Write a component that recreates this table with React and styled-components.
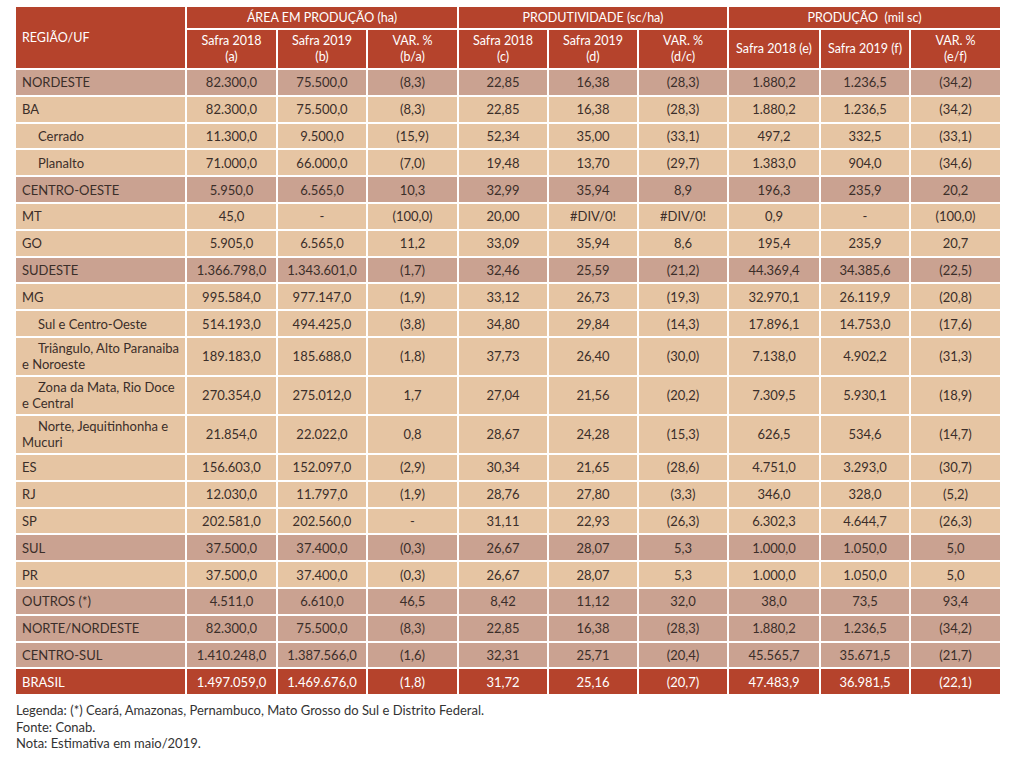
import React from 'react';
import styled, { createGlobalStyle } from 'styled-components';

const GlobalStyle = createGlobalStyle`
  html, body {
    margin: 0;
    padding: 0;
    background: #ffffff;
  }
  body {
    font-family: Lato, 'Noto Sans', sans-serif;
  }
`;

const RED = '#b5432c';
const DARK = '#caa291';
const LIGHT = '#e6c5a3';

const rows = [
  { label: 'NORDESTE', kind: 'region', v: ['82.300,0', '75.500,0', '(8,3)', '22,85', '16,38', '(28,3)', '1.880,2', '1.236,5', '(34,2)'] },
  { label: 'BA', kind: 'state', v: ['82.300,0', '75.500,0', '(8,3)', '22,85', '16,38', '(28,3)', '1.880,2', '1.236,5', '(34,2)'] },
  { label: 'Cerrado', kind: 'state', sub: true, v: ['11.300,0', '9.500,0', '(15,9)', '52,34', '35,00', '(33,1)', '497,2', '332,5', '(33,1)'] },
  { label: 'Planalto', kind: 'state', sub: true, v: ['71.000,0', '66.000,0', '(7,0)', '19,48', '13,70', '(29,7)', '1.383,0', '904,0', '(34,6)'] },
  { label: 'CENTRO-OESTE', kind: 'region', v: ['5.950,0', '6.565,0', '10,3', '32,99', '35,94', '8,9', '196,3', '235,9', '20,2'] },
  { label: 'MT', kind: 'state', v: ['45,0', '-', '(100,0)', '20,00', '#DIV/0!', '#DIV/0!', '0,9', '-', '(100,0)'] },
  { label: 'GO', kind: 'state', v: ['5.905,0', '6.565,0', '11,2', '33,09', '35,94', '8,6', '195,4', '235,9', '20,7'] },
  { label: 'SUDESTE', kind: 'region', v: ['1.366.798,0', '1.343.601,0', '(1,7)', '32,46', '25,59', '(21,2)', '44.369,4', '34.385,6', '(22,5)'] },
  { label: 'MG', kind: 'state', v: ['995.584,0', '977.147,0', '(1,9)', '33,12', '26,73', '(19,3)', '32.970,1', '26.119,9', '(20,8)'] },
  { label: 'Sul e Centro-Oeste', kind: 'state', sub: true, v: ['514.193,0', '494.425,0', '(3,8)', '34,80', '29,84', '(14,3)', '17.896,1', '14.753,0', '(17,6)'] },
  { label: ['Triângulo, Alto Paranaiba', 'e Noroeste'], kind: 'state', sub: true, v: ['189.183,0', '185.688,0', '(1,8)', '37,73', '26,40', '(30,0)', '7.138,0', '4.902,2', '(31,3)'] },
  { label: ['Zona da Mata, Rio Doce', 'e Central'], kind: 'state', sub: true, v: ['270.354,0', '275.012,0', '1,7', '27,04', '21,56', '(20,2)', '7.309,5', '5.930,1', '(18,9)'] },
  { label: ['Norte, Jequitinhonha e', 'Mucuri'], kind: 'state', sub: true, v: ['21.854,0', '22.022,0', '0,8', '28,67', '24,28', '(15,3)', '626,5', '534,6', '(14,7)'] },
  { label: 'ES', kind: 'state', v: ['156.603,0', '152.097,0', '(2,9)', '30,34', '21,65', '(28,6)', '4.751,0', '3.293,0', '(30,7)'] },
  { label: 'RJ', kind: 'state', v: ['12.030,0', '11.797,0', '(1,9)', '28,76', '27,80', '(3,3)', '346,0', '328,0', '(5,2)'] },
  { label: 'SP', kind: 'state', v: ['202.581,0', '202.560,0', '-', '31,11', '22,93', '(26,3)', '6.302,3', '4.644,7', '(26,3)'] },
  { label: 'SUL', kind: 'region', v: ['37.500,0', '37.400,0', '(0,3)', '26,67', '28,07', '5,3', '1.000,0', '1.050,0', '5,0'] },
  { label: 'PR', kind: 'state', v: ['37.500,0', '37.400,0', '(0,3)', '26,67', '28,07', '5,3', '1.000,0', '1.050,0', '5,0'] },
  { label: 'OUTROS (*)', kind: 'region', v: ['4.511,0', '6.610,0', '46,5', '8,42', '11,12', '32,0', '38,0', '73,5', '93,4'] },
  { label: 'NORTE/NORDESTE', kind: 'region', v: ['82.300,0', '75.500,0', '(8,3)', '22,85', '16,38', '(28,3)', '1.880,2', '1.236,5', '(34,2)'] },
  { label: 'CENTRO-SUL', kind: 'region', v: ['1.410.248,0', '1.387.566,0', '(1,6)', '32,31', '25,71', '(20,4)', '45.565,7', '35.671,5', '(21,7)'] },
  { label: 'BRASIL', kind: 'total', v: ['1.497.059,0', '1.469.676,0', '(1,8)', '31,72', '25,16', '(20,7)', '47.483,9', '36.981,5', '(22,1)'] },
];

const colWidths = [169, 89, 88, 89, 88, 88, 88, 90, 88, 89];

const subHeads = [
  ['Safra 2018', '(a)'],
  ['Safra 2019', '(b)'],
  ['VAR. %', '(b/a)'],
  ['Safra 2018', '(c)'],
  ['Safra 2019', '(d)'],
  ['VAR. %', '(d/c)'],
  ['Safra 2018 (e)'],
  ['Safra 2019 (f)'],
  ['VAR. %', '(e/f)'],
];

const Page = styled.div`
  padding: 5px 0 20px 14px;
`;

const Table = styled.table`
  border-collapse: separate;
  border-spacing: 2px;
  table-layout: fixed;
  width: 988px;
  font-size: 13px;
`;

const HeadCell = styled.th`
  background: ${RED};
  color: #ffffff;
  font-weight: 400;
  font-size: 12.5px;
  line-height: 16px;
  padding: 0 4px;
  text-align: ${(props) => (props.left ? 'left' : 'center')};
  padding-left: ${(props) => (props.left ? '6px' : '4px')};
  height: ${(props) => (props.tall ? '38px' : '21px')};
  vertical-align: middle;
`;

const BodyRow = styled.tr`
  background: ${(props) =>
    props.kind === 'total' ? RED : props.kind === 'region' ? DARK : LIGHT};
  color: ${(props) => (props.kind === 'total' ? '#ffffff' : '#3b2e29')};
`;

const Cell = styled.td`
  height: ${(props) => (props.tall ? '37px' : '24.8px')};
  padding: 0 4px;
  text-align: center;
  vertical-align: middle;
  line-height: 16px;
  white-space: nowrap;
`;

const LabelCell = styled.td`
  padding: 0 4px 0 6px;
  text-align: left;
  vertical-align: middle;
  line-height: 16px;
  text-indent: ${(props) => (props.sub ? '16px' : '0')};
`;

const Legend = styled.div`
  margin: 6px 0 0 2px;
  font-size: 13px;
  line-height: 16.5px;
  color: #333333;
`;

const Label = ({ label }) =>
  Array.isArray(label) ? (
    <>
      {label[0]}
      <br />
      {label[1]}
    </>
  ) : (
    label
  );

const App = () => (
  <Page>
    <GlobalStyle />
    <Table>
      <colgroup>
        {colWidths.map((w, i) => (
          <col key={i} style={{ width: w }} />
        ))}
      </colgroup>
      <thead>
        <tr>
          <HeadCell rowSpan={2} left>
            REGIÃO/UF
          </HeadCell>
          <HeadCell colSpan={3}>ÁREA EM PRODUÇÃO (ha)</HeadCell>
          <HeadCell colSpan={3}>PRODUTIVIDADE (sc/ha)</HeadCell>
          <HeadCell colSpan={3}>PRODUÇÃO&nbsp; (mil sc)</HeadCell>
        </tr>
        <tr>
          {subHeads.map((h, i) => (
            <HeadCell key={i} tall>
              {h[0]}
              {h[1] && (
                <>
                  <br />
                  {h[1]}
                </>
              )}
            </HeadCell>
          ))}
        </tr>
      </thead>
      <tbody>
        {rows.map((r, i) => {
          const tall = Array.isArray(r.label);
          return (
            <BodyRow key={i} kind={r.kind}>
              <LabelCell sub={r.sub}>
                <Label label={r.label} />
              </LabelCell>
              {r.v.map((val, j) => (
                <Cell key={j} tall={tall}>
                  {val}
                </Cell>
              ))}
            </BodyRow>
          );
        })}
      </tbody>
    </Table>
    <Legend>
      Legenda: (*) Ceará, Amazonas, Pernambuco, Mato Grosso do Sul e Distrito Federal.
      <br />
      Fonte: Conab.
      <br />
      Nota: Estimativa em maio/2019.
    </Legend>
  </Page>
);

export default App;
